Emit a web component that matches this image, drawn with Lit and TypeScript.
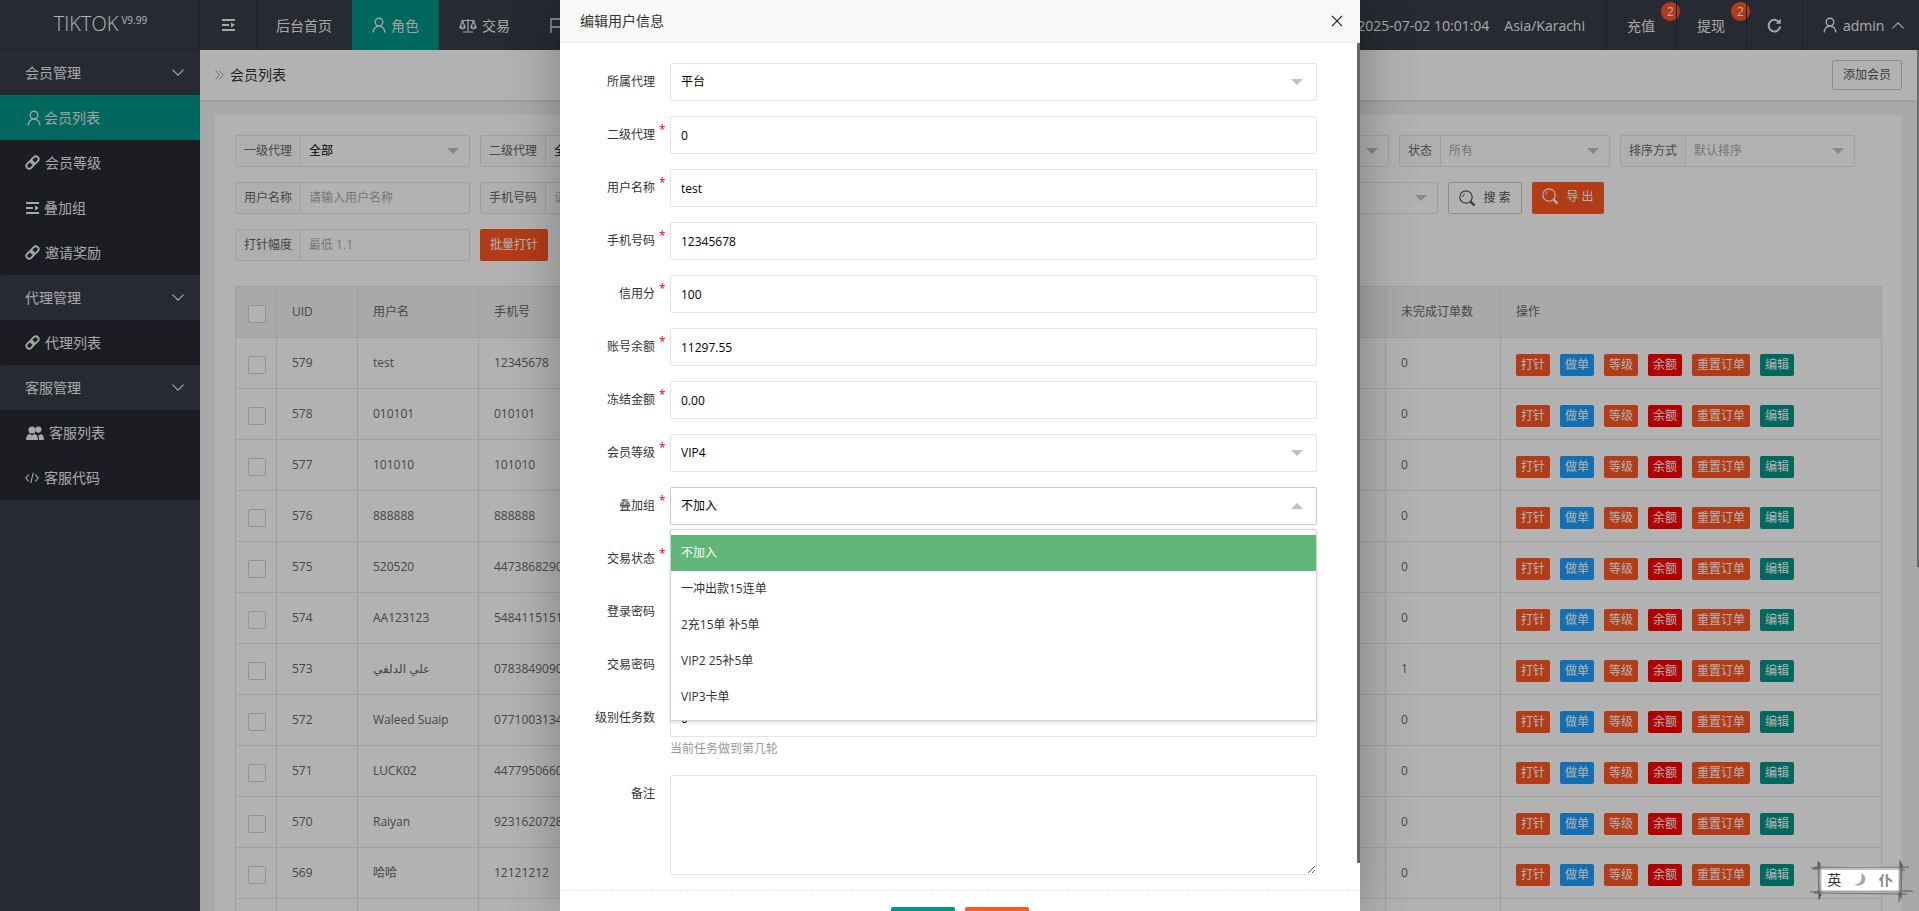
import { LitElement, css, html, svg } from "lit";
import { customElement } from "lit/decorators.js";

const userIcon = html`<svg class="ic" width="14" height="16" viewBox="0 0 14 16" fill="none" stroke="currentColor" stroke-width="1.4">
  <circle cx="7" cy="5" r="3.8"></circle><path d="M1.2 15.6c0-3.700 2.400-6.600 5.800-6.600s5.800 2.900 5.800 6.600"></path></svg>`;

const scaleIcon = html`<svg class="ic" width="18" height="15" viewBox="0 0 18 15" fill="none" stroke="currentColor" stroke-width="1.2">
  <path d="M9 1v12M4 14h10M2.500 2.500h13M3.500 3 1 9h5zM14.500 3 12 9h5z"></path>
  <path d="M1 9c.4 2.400 4.600 2.400 5 0M12 9c.4 2.400 4.600 2.400 5 0"></path></svg>`;

const shrinkIcon = html`<svg class="ic" width="14" height="12" viewBox="0 0 14 12" fill="currentColor">
  <rect width="13" height="2" y="0"></rect><rect width="7" height="2" y="5"></rect>
  <path d="M9 3.600 13 6 9 8.400z"></path><rect width="13" height="2" y="10"></rect></svg>`;

const flagIcon = html`<svg class="ic" width="14" height="15" viewBox="0 0 14 15" fill="none" stroke="currentColor" stroke-width="1.3">
  <path d="M1 15V1h12v8H1"></path></svg>`;

const linkIcon = html`<svg class="ic" width="15" height="15" viewBox="0 0 24 24" fill="none" stroke="currentColor" stroke-width="3">
  <g transform="rotate(-45 12 12)"><rect x="0" y="7.500" width="13.500" height="9" rx="4.500"></rect><rect x="10.500" y="7.500" width="13.500" height="9" rx="4.500"></rect></g></svg>`;

const groupIcon = html`<svg class="ic" width="18" height="14" viewBox="0 0 18 14" fill="currentColor">
  <circle cx="6" cy="4" r="3.600"></circle><circle cx="12.400" cy="3.600" r="3.100"></circle>
  <path d="M0 14c0-3.600 1.600-5.600 3.600-6.200L6 9.600l2.400-1.800c2 .6 3.600 2.600 3.600 6.200z"></path>
  <path d="M13 14h5c0-3.600-1.300-5.400-3.200-6l-2 1.400-.9-.7c.8 1.200 1.100 3 1.100 5.300z"></path></svg>`;

const codeIcon = html`<svg class="ic" width="14" height="12" viewBox="0 0 14 12" fill="none" stroke="currentColor" stroke-width="1.1">
  <path d="M3.600 2.600.8 6l2.800 3.400M10.400 2.600 13.200 6l-2.800 3.400M8.200.8 5.800 11.200"></path></svg>`;

const chevron = (up = false) => html`<svg class="chev" width="12" height="7" viewBox="0 0 12 7" fill="none" stroke="currentColor" stroke-width="1.2">
  <path d=${up ? "M.5 6.400 6 .9l5.500 5.500" : "M.5.6 6 6.100 11.500.6"}></path></svg>`;

const refreshIcon = html`<svg class="ic" width="15" height="15" viewBox="0 0 15 15" fill="none" stroke="currentColor" stroke-width="2">
  <path d="M12.600 5A5.800 5.800 0 1 0 13.200 8.400"></path><path d="M13.800.8v5h-5z" fill="currentColor" stroke="none"></path></svg>`;

const searchIcon = html`<svg class="ic" width="17" height="17" viewBox="0 0 17 17" fill="none" stroke="currentColor">
  <circle cx="7" cy="7" r="6.200" stroke-width="1.2"></circle><path d="M3.900 7c0-1.600.8-2.800 2-3.400" stroke-width="1"></path>
  <path d="m11.600 11.600 4 4" stroke-width="2.200"></path></svg>`;

const crumbIcon = html`<svg class="crumb" width="9" height="10" viewBox="0 0 9 10" fill="none" stroke="currentColor" stroke-width="1">
  <path d="M.6.6 4.400 5 .6 9.400M4.400.6 8.200 5 4.400 9.400"></path></svg>`;

interface SideItem {
  label: string;
  icon: unknown;
  active?: boolean;
  cls?: string;
}

const sideGroups: { title: string; items: SideItem[] }[] = [
  {
    title: "会员管理",
    items: [
      { label: "会员列表", icon: userIcon, active: true, cls: "user" },
      { label: "会员等级", icon: linkIcon },
      { label: "叠加组", icon: shrinkIcon, cls: "shrink" },
      { label: "邀请奖励", icon: linkIcon },
    ],
  },
  { title: "代理管理", items: [{ label: "代理列表", icon: linkIcon }] },
  {
    title: "客服管理",
    items: [
      { label: "客服列表", icon: groupIcon, cls: "group" },
      { label: "客服代码", icon: codeIcon },
    ],
  },
];

const rows = [
  { uid: 579, name: "test", phone: "12345678", open: 0 },
  { uid: 578, name: "010101", phone: "010101", open: 0 },
  { uid: 577, name: "101010", phone: "101010", open: 0 },
  { uid: 576, name: "888888", phone: "888888", open: 0 },
  { uid: 575, name: "520520", phone: "447386829012", open: 0 },
  { uid: 574, name: "AA123123", phone: "548411515100", open: 0 },
  { uid: 573, name: "علي الدلفي", phone: "078384909012", open: 1 },
  { uid: 572, name: "Waleed Suaip", phone: "077100313412", open: 0 },
  { uid: 571, name: "LUCK02", phone: "447795066012", open: 0 },
  { uid: 570, name: "Raiyan", phone: "923162072812", open: 0 },
  { uid: 569, name: "哈哈", phone: "12121212", open: 0 },
];

const actions = [
  { label: "打针", cls: "warm" },
  { label: "做单", cls: "blue" },
  { label: "等级", cls: "warm" },
  { label: "余额", cls: "red" },
  { label: "重置订单", cls: "warm" },
  { label: "编辑", cls: "teal" },
];

const formRows = [
  { label: "二级代理", value: "0" },
  { label: "用户名称", value: "test" },
  { label: "手机号码", value: "12345678" },
  { label: "信用分", value: "100" },
  { label: "账号余额", value: "11297.55" },
  { label: "冻结金额", value: "0.00" },
];

const groupOptions = ["不加入", "一冲出款15连单", "2充15单 补5单", "VIP2 25补5单", "VIP3卡单"];

// rough hand-drawn frame of the input method widget
const imeFrame = svg`
  <g stroke="#3c3c3c" fill="none" stroke-width="1.1" opacity=".7">
    <path d="M2 8 L100 7M4 9 L96 10M6 7 L92 8M1 32 L104 31M5 33 L98 34M8 31 L90 32"></path>
    <path d="M9 1 L10 40M11 3 L11 38M10 2 L12 36M91 0 L90 42M93 4 L92 39M92 2 L91 37"></path>
  </g>`;

@customElement("app-root")
export class AppRoot extends LitElement {
  static styles = css`
    :host {
      display: block;
      width: 100vw;
      height: 100vh;
      overflow: hidden;
      position: relative;
      font: 12px/1.5 "Open Sans", "Noto Sans CJK SC", "DejaVu Sans", sans-serif;
      color: #666;
      background: #f2f2f2;
    }
    .ic { display: block; flex: none; }
    .shell {
      display: grid;
      grid-template: 50px 1fr / 200px 1fr;
      height: 100%;
    }

    /* header */
    .top {
      grid-column: 1 / 3;
      display: flex;
      align-items: stretch;
      background: #393d49;
      color: #f0f0f0;
      font-size: 14px;
    }
    .logo {
      width: 200px;
      box-sizing: border-box;
      display: flex;
      justify-content: center;
      padding-left: 2px;
      border-right: 1px solid #2f323c;
      border-bottom: 1px solid #2f323c;
      line-height: 48px;
      font-size: 20px;
      font-weight: 300;
      color: #fff;
    }
    .logo sup { font-size: 10px; line-height: 1; margin: 15px 0 0 3px; font-weight: 400; vertical-align: top; }
    .tab {
      display: flex;
      align-items: center;
      gap: 5px;
      padding: 0 20px 0 19px;
      border-left: 1px solid #2f323c;
      box-sizing: border-box;
    }
    .tab.toggle { width: 56px; padding: 0 0 0 22px; border-left: 0; }
    .tab.active { background: #009688; border-left: 0; padding-left: 20px; color: #e8e8e8; }
    .tab.scale { border-left: 0; padding-left: 20px; }
    .top-right { margin-left: auto; display: flex; }
    .clock { display: flex; align-items: center; gap: 15px; padding-right: 21px; }
    .cell {
      position: relative;
      display: flex;
      align-items: center;
      box-sizing: border-box;
      border-left: 1px solid #2f323c;
      padding-left: 20px;
      width: 70px;
    }
    .cell.refresh { width: 56px; }
    .cell.user { width: 117px; gap: 6px; }
    .cell.user .chev { margin-left: 2px; }
    .badge {
      position: absolute;
      top: 2px;
      left: 54px;
      width: 19px;
      height: 19px;
      border-radius: 50%;
      background: #ff5722;
      color: #fff;
      font-size: 12px;
      line-height: 19px;
      text-align: center;
    }

    /* sidebar */
    .side { background: #393d49; color: #f0f0f0; font-size: 14px; }
    .side-title {
      height: 45px;
      display: flex;
      align-items: center;
      justify-content: space-between;
      padding: 0 16px 0 25px;
    }
    .side-list { background: rgba(0, 0, 0, 0.3); border-radius: 0 0 0 3px; }
    .side-item {
      height: 45px;
      display: flex;
      align-items: center;
      gap: 5px;
      padding-left: 25px;
    }
    .side-item.user { padding-left: 27px; gap: 3px; }
    .side-item.shrink { padding-left: 26px; gap: 4px; }
    .side-item.group { padding-left: 26px; gap: 5px; }
    .side-item.active { background: #009688; color: #e8e8e8; }

    /* page */
    .main { min-width: 0; position: relative; padding-right: 2px; }
    .thumb { position: absolute; top: 0; right: 0; width: 2px; height: 517px; background: #999; }
    .bar {
      height: 50px;
      box-sizing: border-box;
      background: #fff;
      box-shadow: 0 1px 4px rgba(0, 0, 0, 0.12);
      display: flex;
      align-items: center;
      padding: 0 15px 1px;
      color: #333;
      font-size: 14px;
    }
    .crumb { color: #999; margin-right: 6px; flex: none; }
    .btn {
      height: 32px;
      box-sizing: border-box;
      display: inline-flex;
      align-items: center;
      justify-content: center;
      border-radius: 2px;
      font-size: 12px;
      white-space: nowrap;
    }
    .btn.line { border: 1px solid #c9c9c9; background: #fff; color: #555; }
    .btn.add { height: 30px; width: 70px; margin-left: auto; }
    .btn.fill { background: #ff5722; color: #fff; }
    .btn.search { width: 74px; gap: 7px; }
    .btn.export { width: 72px; gap: 7px; }
    .btn.export .ic { margin-top: -3px; }
    .btn.export span { margin-top: -3px; }
    .btn.batch { width: 68px; }
    .card {
      margin: 15px;
      background: #fff;
      padding: 20px;
      height: 900px;
      box-sizing: border-box;
    }
    .filters { display: flex; gap: 10px; margin-bottom: 15px; }
    .filters.last { margin-bottom: 25px; }
    .fg {
      display: flex;
      height: 32px;
      box-sizing: border-box;
      width: 235px;
      border: 1px solid #e6e6e6;
      border-radius: 2px;
      background: #fff;
    }
    .fg.wide1 { width: 664px; }
    .fg.wide2 { width: 713px; }
    .fg.w211 { width: 211px; }
    .fg > label {
      flex: none;
      width: 65px;
      box-sizing: border-box;
      padding-left: 8px;
      line-height: 30px;
      background: #fbfbfb;
      border-right: 1px solid #e6e6e6;
      color: #666;
    }
    .fg.short > label { width: 41px; }
    .fg .val {
      flex: 1;
      min-width: 0;
      display: flex;
      align-items: center;
      justify-content: space-between;
      padding: 0 10px 0 8px;
      color: #000;
    }
    .fg .val.ph { color: #aaa; }
    .fg input {
      flex: 1;
      min-width: 0;
      border: 0;
      outline: 0;
      padding: 0 8px;
      font: inherit;
      background: transparent;
    }
    input::placeholder { color: #aaa; }
    .tri { width: 0; height: 0; flex: none; border: 6px solid transparent; border-top-color: #c2c2c2; border-bottom-width: 0; }
    .tri.up { border-top-width: 0; border-bottom: 6px solid #c2c2c2; }

    table {
      border-collapse: collapse;
      table-layout: fixed;
      width: 1647px;
    }
    th, td {
      border: 1px solid #e6e6e6;
      height: 51px;
      padding: 0 15px;
      box-sizing: border-box;
      font-weight: 400;
      text-align: left;
      white-space: nowrap;
      overflow: hidden;
      color: #666;
    }
    th { background: #f2f2f2; }
    .box {
      width: 18px;
      height: 18px;
      box-sizing: border-box;
      border: 1px solid #d2d2d2;
      border-radius: 2px;
      background: #fff;
      margin: 3px 0 0 -3px;
    }
    .ops { display: flex; gap: 10px; margin-top: 3px; }
    .xs {
      height: 22px;
      line-height: 22px;
      padding: 0 5px;
      border-radius: 2px;
      color: #fff;
    }
    .xs.warm { background: #ff5722; }
    .xs.blue { background: #1e9fff; }
    .xs.red { background: #f00; }
    .xs.teal { background: #009688; }

    /* dialog */
    .shade { position: absolute; inset: 0; background: rgba(0, 0, 0, 0.3); }
    .dialog {
      position: absolute;
      top: 0;
      left: 560px;
      width: 800px;
      height: 100%;
      overflow: hidden;
      background: #fff;
      box-shadow: 1px 1px 50px rgba(0, 0, 0, 0.3);
      color: #333;
    }
    .dlg-title {
      height: 43px;
      box-sizing: border-box;
      border-bottom: 1px solid #eee;
      background: #f8f8f8;
      display: flex;
      align-items: center;
      justify-content: space-between;
      padding: 0 17px 1px 20px;
      font-size: 14px;
    }
    .dlg-thumb { position: absolute; top: 43px; right: 0; width: 3px; height: 820px; background: #666; }
    .dlg-body { padding: 20px 0 0; }
    .row { display: flex; margin-bottom: 15px; position: relative; }
    .row > label { width: 95px; text-align: right; line-height: 38px; flex: none; }
    .star { width: 15px; flex: none; color: #f00; line-height: 28px; padding-left: 4px; box-sizing: border-box; }
    .ctl { width: 647px; flex: none; }
    .ctl input, .ctl textarea, .sel {
      display: block;
      width: 100%;
      height: 38px;
      box-sizing: border-box;
      border: 1px solid #e6e6e6;
      border-radius: 2px;
      padding: 0 10px;
      font: inherit;
      color: #000;
      outline: 0;
      background: #fff;
    }
    .sel { display: flex; align-items: center; justify-content: space-between; padding-right: 13px; }
    .sel.open { border-color: #c9c9c9; }
    .ctl textarea { height: 100px; padding: 6px 10px; }
    .hint { color: #999; height: 23px; line-height: 23px; }
    .drop {
      position: absolute;
      z-index: 2;
      top: 42px;
      left: 110px;
      width: 647px;
      box-sizing: border-box;
      padding: 5px 0;
      border: 1px solid #d2d2d2;
      border-radius: 2px;
      background: #fff;
      box-shadow: 0 2px 4px rgba(0, 0, 0, 0.12);
    }
    .drop div { height: 36px; line-height: 36px; padding: 0 10px; color: #333; }
    .drop div.on { background: #5fb878; color: #fff; }
    .dlg-foot {
      margin-top: 15px;
      border-top: 1px dashed #e6e6e6;
      padding-top: 16px;
      display: flex;
      justify-content: center;
      gap: 10px;
    }
    .dlg-foot span {
      width: 64px;
      height: 38px;
      border-radius: 2px;
      background: #009688;
    }
    .dlg-foot span + span { background: #ff5722; }

    /* input method widget */
    .ime {
      position: absolute;
      left: 1809px;
      top: 860px;
      width: 105px;
      height: 42px;
    }
    .ime svg.frame { position: absolute; inset: 0; }
    .ime-in {
      position: absolute;
      left: 13px;
      top: 10px;
      width: 76px;
      height: 20px;
      display: flex;
      align-items: center;
      justify-content: space-around;
      background: #fff;
      box-shadow: 0 0 3px 2px rgba(255, 255, 255, 0.7);
      font-size: 14px;
      color: #333;
      line-height: 20px;
    }
    .ime-in .soft { color: #888; font-weight: 700; }
  `;

  private renderSide() {
    return sideGroups.map(
      (g) => html`
        <div class="side-title"><span>${g.title}</span>${chevron()}</div>
        <div class="side-list">
          ${g.items.map(
            (i) => html`<div class="side-item ${i.active ? "active" : ""} ${i.cls ?? ""}">${i.icon}<span>${i.label}</span></div>`,
          )}
        </div>
      `,
    );
  }

  private renderFilters() {
    const select = (label: string, value: string, ph = false, cls = "") => html`
      <div class="fg ${cls}"><label>${label}</label>
        <div class="val ${ph ? "ph" : ""}"><span>${value}</span><i class="tri"></i></div></div>`;
    const input = (label: string, ph: string) => html`
      <div class="fg"><label>${label}</label><input placeholder=${ph} /></div>`;
    return html`
      <div class="filters">
        ${select("一级代理", "全部")}
        ${select("二级代理", "全部")}
        ${select("会员等级", "全部", false, "wide1")}
        ${select("状态", "所有", true, "short w211")}
        ${select("排序方式", "默认排序", true)}
      </div>
      <div class="filters">
        ${input("用户名称", "请输入用户名称")}
        ${input("手机号码", "请输入手机号码")}
        ${select("叠加组", "全部", true, "wide2")}
        <span class="btn line search">${searchIcon}<span>搜 索</span></span>
        <span class="btn fill export">${searchIcon}<span>导 出</span></span>
      </div>
      <div class="filters last">
        ${input("打针幅度", "最低 1.1")}
        <span class="btn fill batch">批量打针</span>
      </div>
    `;
  }

  private renderTable() {
    return html`
      <table>
        <colgroup>
          <col style="width:41px" /><col style="width:81px" /><col style="width:121px" />
          <col style="width:162px" /><col /><col style="width:115px" /><col style="width:381px" />
        </colgroup>
        <tr>
          <th><div class="box"></div></th><th>UID</th><th>用户名</th><th>手机号</th><th></th><th>未完成订单数</th><th>操作</th>
        </tr>
        ${rows.map(
          (r) => html`<tr>
            <td><div class="box"></div></td>
            <td>${r.uid}</td>
            <td>${r.name}</td>
            <td>${r.phone}</td>
            <td></td>
            <td>${r.open}</td>
            <td><div class="ops">${actions.map((a) => html`<span class="xs ${a.cls}">${a.label}</span>`)}</div></td>
          </tr>`,
        )}
        <tr><td></td><td></td><td></td><td></td><td></td><td></td><td></td></tr>
      </table>
    `;
  }

  private renderDialog() {
    const field = (label: string, body: unknown, star = true) => html`
      <div class="row"><label>${label}</label><span class="star">${star ? "*" : ""}</span><div class="ctl">${body}</div></div>`;
    const sel = (v: string) => html`<div class="sel"><span>${v}</span><i class="tri"></i></div>`;
    return html`
      <div class="dialog">
        <div class="dlg-title">
          <span>编辑用户信息</span>
          <svg width="12" height="12" viewBox="0 0 12 12" fill="none" stroke="#222" stroke-width="1.2"><path d="M1 .8l10 10.400M11 .8 1 11.200"></path></svg>
        </div>
        <div class="dlg-thumb"></div>
        <div class="dlg-body">
          ${field("所属代理", sel("平台"), false)}
          ${formRows.map((f) => field(f.label, html`<input value=${f.value} />`))}
          ${field("会员等级", sel("VIP4"))}
          <div class="row">
            <label>叠加组</label><span class="star">*</span>
            <div class="ctl"><div class="sel open"><span>不加入</span><i class="tri up"></i></div></div>
            <div class="drop">
              ${groupOptions.map((o, i) => html`<div class=${i === 0 ? "on" : ""}>${o}</div>`)}
            </div>
          </div>
          ${field("交易状态", sel(""))}
          ${field("登录密码", html`<input />`, false)}
          ${field("交易密码", html`<input />`, false)}
          <div class="row">
            <label>级别任务数</label><span class="star"></span>
            <div class="ctl"><input value="0" /><div class="hint">当前任务做到第几轮</div></div>
          </div>
          ${field("备注", html`<textarea></textarea>`, false)}
        </div>
        <div class="dlg-foot"><span></span><span></span></div>
      </div>
    `;
  }

  render() {
    return html`
      <div class="shell">
        <header class="top">
          <div class="logo">TIKTOK<sup>V9.99</sup></div>
          <div class="tab toggle">${shrinkIcon}</div>
          <div class="tab">后台首页</div>
          <div class="tab active">${userIcon}角色</div>
          <div class="tab scale">${scaleIcon}交易</div>
          <div class="tab scale">${flagIcon}</div>
          <div class="top-right">
            <div class="clock"><span>2025-07-02 10:01:04</span><span>Asia/Karachi</span></div>
            <div class="cell">充值<span class="badge">2</span></div>
            <div class="cell">提现<span class="badge">2</span></div>
            <div class="cell refresh">${refreshIcon}</div>
            <div class="cell user">${userIcon}admin${chevron(true)}</div>
          </div>
        </header>
        <aside class="side">${this.renderSide()}</aside>
        <main class="main">
          <div class="thumb"></div>
          <div class="bar">${crumbIcon}会员列表<span class="btn line add">添加会员</span></div>
          <div class="card">${this.renderFilters()}${this.renderTable()}</div>
        </main>
      </div>
      <div class="shade"></div>
      ${this.renderDialog()}
      <div class="ime">
        <svg class="frame" width="105" height="42" viewBox="0 0 105 42">${imeFrame}</svg>
        <div class="ime-in">
          <span>英</span>
          <svg width="16" height="16" viewBox="0 0 16 16" fill="#aaa"><path d="M9 1c4 2 5 5 4 8-1 3.500-6 6-11 3.500 3.500 0 6-1.500 7-4C9.800 6 10 3.500 9 1z"></path></svg>
          <span class="soft">仆</span>
        </div>
      </div>
    `;
  }
}

declare global {
  interface HTMLElementTagNameMap {
    "app-root": AppRoot;
  }
}
